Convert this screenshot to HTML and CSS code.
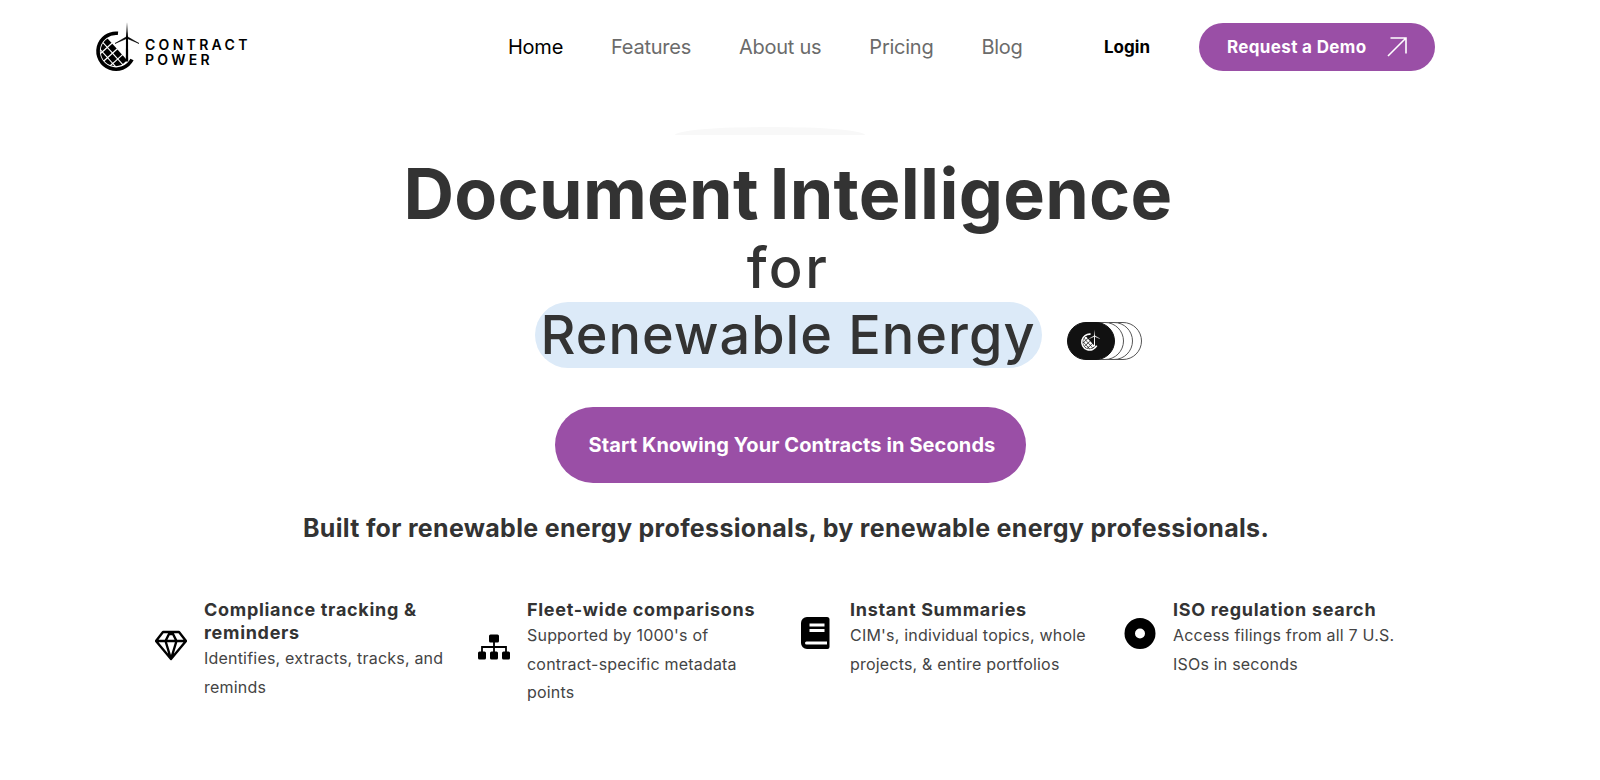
FILE: index.html
```html
<!DOCTYPE html>
<html lang="en">
<head>
    <meta charset="UTF-8">
    <meta name="viewport" content="width=device-width, initial-scale=1.0">
    <title>Contract Power</title>
    <link rel="stylesheet" href="styles.css">
</head>
<body>
    <svg class="defs" width="0" height="0">
        <symbol id="logo-mark" viewBox="0 0 50 56">
            <clipPath id="panel-clip"><circle cx="21.7" cy="29.2" r="15"/></clipPath>
            <path d="M24 11.300A18 18 0 1 0 38 37.500" fill="none" stroke="currentColor" stroke-width="3.6"/>
            <g clip-path="url(#panel-clip)">
                <g transform="translate(13.500 15.500) rotate(48)" fill="currentColor">
                    <rect x="0" y="0.6" width="6.600" height="5.600"/><rect x="7.800" y="0.6" width="6.600" height="5.600"/><rect x="15.600" y="0.6" width="6.600" height="5.600"/><rect x="23.400" y="0.6" width="6.600" height="5.600"/>
                    <rect x="0" y="7.300" width="6.600" height="5.600"/><rect x="7.800" y="7.300" width="6.600" height="5.600"/><rect x="15.600" y="7.300" width="6.600" height="5.600"/><rect x="23.400" y="7.300" width="6.600" height="5.600"/>
                    <rect x="0" y="14" width="6.600" height="5.600"/><rect x="7.800" y="14" width="6.600" height="5.600"/><rect x="15.600" y="14" width="6.600" height="5.600"/><rect x="23.400" y="14" width="6.600" height="5.600"/>
                </g>
            </g>
            <path d="M33 .5 34 15 34.200 39.500H31.800L32 15Z" fill="currentColor"/>
            <path d="M33 14.500 21 21.500 32.600 16.500ZM33 14.500 45 21.500 33.400 16.500Z" fill="currentColor" stroke="currentColor" stroke-width=".6"/>
        </symbol>
    </svg>

    <header class="topbar">
        <a class="brand" href="#">
            <svg class="brand-mark"><use href="#logo-mark"/></svg>
            <span class="brand-name">CONTRACT<br>POWER</span>
        </a>
        <nav class="nav">
            <a class="nav-link active" href="#">Home</a>
            <a class="nav-link" href="#">Features</a>
            <a class="nav-link" href="#">About us</a>
            <a class="nav-link" href="#">Pricing</a>
            <a class="nav-link" href="#">Blog</a>
        </nav>
        <a class="login" href="#">Login</a>
        <a class="demo" href="#">
            Request a Demo
            <svg width="20" height="20" viewBox="0 0 20 20" fill="none" stroke="#fff" stroke-width="1.6"><path d="M1 19 19 1M3.500 1H19V16.500"/></svg>
        </a>
    </header>

    <main class="hero">
        <div class="glow"></div>
        <h1 class="headline">Document Intelligence</h1>
        <p class="for">for</p>
        <p class="highlight">
            Renewable Energy
            <span class="stack">
                <span class="ring dark"><svg class="ring-mark"><use href="#logo-mark"/></svg></span>
                <span class="ring r1"></span>
                <span class="ring r2"></span>
                <span class="ring r3"></span>
            </span>
        </p>
        <a class="cta" href="#">Start Knowing Your Contracts in Seconds</a>
        <p class="built">Built for renewable energy professionals, by renewable energy professionals.</p>

        <section class="features">
            <div class="feature">
                <svg class="icon" viewBox="0 0 32 32" fill="none" stroke="#000" stroke-width="2.400" stroke-linejoin="round"><path d="M8 3H24L31 12 16 30 1 12ZM1 12H31M10.500 12 16 30 21.500 12 18 5H14Z"/></svg>
                <div>
                    <h3 class="feature-title">Compliance tracking &amp; reminders</h3>
                    <p class="feature-text">Identifies, extracts, tracks, and reminds</p>
                </div>
            </div>
            <div class="feature">
                <svg class="icon" viewBox="0 0 32 32"><rect x="11" y="3.500" width="10" height="8" rx="1.500"/><rect x="0" y="20.500" width="8" height="8" rx="1.500"/><rect x="12" y="20.500" width="8" height="8" rx="1.500"/><rect x="24" y="20.500" width="8" height="8" rx="1.500"/><path d="M16 11V21M4 21V16H28V21" fill="none" stroke="#000" stroke-width="1.800"/></svg>
                <div>
                    <h3 class="feature-title">Fleet-wide comparisons</h3>
                    <p class="feature-text">Supported by 1000's of contract-specific metadata points</p>
                </div>
            </div>
            <div class="feature">
                <svg class="icon" viewBox="0 0 32 32"><path fill-rule="evenodd" d="M6 0H26A2.500 2.500 0 0 1 28.500 2.500V30A2 2 0 0 1 26.500 32H6A6 6 0 0 1 0 26V6A6 6 0 0 1 6 0ZM8.500 6.500V9.500H23.500V6.500ZM8.500 12V15H23.500V12ZM5.500 24.500A1.500 1.500 0 0 0 4 26 1.500 1.500 0 0 0 5.500 27.500H26V24.500Z"/></svg>
                <div>
                    <h3 class="feature-title">Instant Summaries</h3>
                    <p class="feature-text">CIM's, individual topics, whole projects, &amp; entire portfolios</p>
                </div>
            </div>
            <div class="feature">
                <svg class="icon" viewBox="0 0 32 32"><path fill-rule="evenodd" d="M16 1A15.500 15.500 0 1 1 16 32 15.500 15.500 0 0 1 16 1ZM16 11.500A5 5 0 1 0 16 21.500 5 5 0 0 0 16 11.500Z"/></svg>
                <div>
                    <h3 class="feature-title">ISO regulation search</h3>
                    <p class="feature-text">Access filings from all 7 U.S. ISOs in seconds</p>
                </div>
            </div>
        </section>
    </main>
</body>
</html>
```

FILE: styles.css
```css
*{
    box-sizing: border-box;
}

body{
    margin: 0;
    background: #fff;
    color: #333;
    font-family: 'Inter', sans-serif;
    overflow: hidden;
}

a{
    text-decoration: none;
    color: inherit;
}

p, h1, h3{
    margin: 0;
}

.defs{
    position: absolute;
}

.topbar{
    display: flex;
    align-items: center;
    height: 48px;
    margin-top: 23px;
    padding-left: 97px;
}

.brand{
    display: flex;
    align-items: center;
    width: 411px;
    color: #000;
}

.brand-mark{
    width: 50px;
    height: 56px;
    margin: 5px 0 0 -3px;
}

.brand-name{
    font-size: 14px;
    font-weight: 600;
    line-height: 15px;
    letter-spacing: 3.300px;
    margin: 10px 0 0 1px;
}

.nav{
    display: flex;
    gap: 48px;
    width: 596px;
    font-size: 20px;
}

.nav-link{
    color: #6b6b6b;
    letter-spacing: -0.25px;
}

.nav-link.active{
    color: #000;
}

.login{
    width: 95px;
    color: #000;
    font-size: 17px;
    font-weight: 700;
}

.demo{
    display: flex;
    align-items: center;
    justify-content: space-between;
    width: 236px;
    height: 48px;
    padding: 0 28px;
    border-radius: 24px;
    background: #9a4fa6;
    color: #fff;
    font-size: 17px;
    font-weight: 700;
    letter-spacing: 0.35px;
}

.hero{
    position: relative;
    display: flex;
    flex-direction: column;
    align-items: center;
    padding-right: 24px;
}

.glow{
    position: absolute;
    top: 56px;
    left: 675px;
    width: 190px;
    height: 8px;
    border-radius: 95px 95px 0 0 / 8px 8px 0 0;
    background: #f8f8f8;
}

.headline{
    margin-top: 83px;
    font-size: 70px;
    font-weight: 700;
    line-height: 80px;
    letter-spacing: 0.3px;
    word-spacing: -6px;
    color: #333;
}

.for{
    margin-top: -1px;
    font-size: 56px;
    font-weight: 500;
    line-height: 70px;
    letter-spacing: 2.500px;
}

.highlight{
    position: relative;
    width: 507px;
    height: 66px;
    margin-top: -1px;
    border-radius: 33px;
    background: #dceaf8;
    font-size: 54px;
    font-weight: 500;
    line-height: 66px;
    letter-spacing: 1px;
    text-align: center;
}

.stack{
    position: absolute;
    top: 20px;
    left: 532px;
    display: flex;
}

.ring{
    display: flex;
    align-items: center;
    justify-content: center;
    width: 48px;
    height: 38px;
    margin-right: -39px;
    border: 1px solid #555;
    border-radius: 19px;
    background: #fff;
}

.dark{
    z-index: 4;
    background: #111;
    border-color: #111;
    color: #fff;
}

.r1{
    z-index: 3;
}

.r2{
    z-index: 2;
}

.r3{
    z-index: 1;
}

.ring-mark{
    width: 22px;
    height: 25px;
}

.cta{
    display: flex;
    align-items: center;
    justify-content: center;
    width: 471px;
    height: 76px;
    margin-top: 39px;
    margin-left: 4px;
    padding-left: 4px;
    border-radius: 38px;
    background: #9a4fa6;
    color: #fff;
    font-size: 20px;
    font-weight: 700;
    letter-spacing: 0.1px;
}

.built{
    margin-top: 29px;
    margin-right: 4px;
    font-size: 25px;
    font-weight: 700;
    line-height: 32px;
    letter-spacing: 0.31px;
}

.features{
    display: grid;
    grid-template-columns: repeat(4, 323px);
    width: 1292px;
    margin-top: 54px;
    margin-left: 26px;
    align-items: start;
}

.feature{
    display: flex;
    align-items: center;
    gap: 17px;
    padding-right: 24px;
}

.icon{
    flex: none;
    width: 32px;
    height: 32px;
    margin-bottom: 10px;
}

.feature-title{
    font-size: 18px;
    font-weight: 700;
    line-height: 23px;
    letter-spacing: 0.7px;
}

.feature-text{
    font-size: 16px;
    line-height: 28.500px;
    letter-spacing: 0.2px;
    color: #444;
}
```
